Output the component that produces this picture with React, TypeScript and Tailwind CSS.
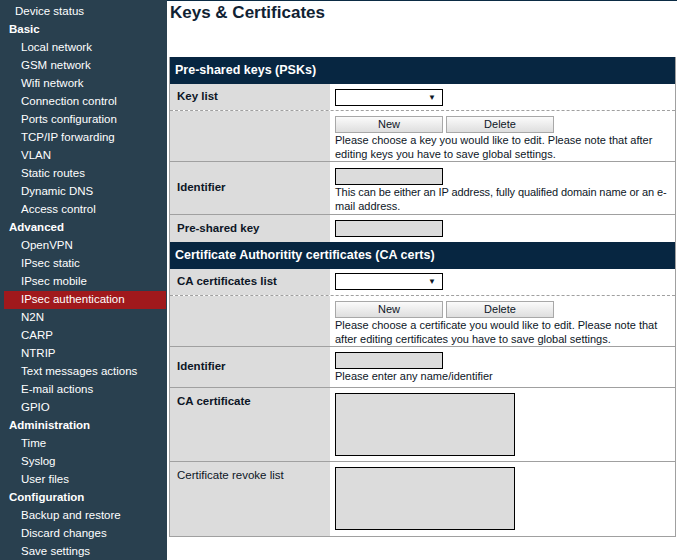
import { ReactNode } from 'react'

type NavItem = { label: string; kind?: 'cat' | 'top'; active?: boolean }

const nav: NavItem[] = [
  { label: 'Device status', kind: 'top' },
  { label: 'Basic', kind: 'cat' },
  { label: 'Local network' },
  { label: 'GSM network' },
  { label: 'Wifi network' },
  { label: 'Connection control' },
  { label: 'Ports configuration' },
  { label: 'TCP/IP forwarding' },
  { label: 'VLAN' },
  { label: 'Static routes' },
  { label: 'Dynamic DNS' },
  { label: 'Access control' },
  { label: 'Advanced', kind: 'cat' },
  { label: 'OpenVPN' },
  { label: 'IPsec static' },
  { label: 'IPsec mobile' },
  { label: 'IPsec authentication', active: true },
  { label: 'N2N' },
  { label: 'CARP' },
  { label: 'NTRIP' },
  { label: 'Text messages actions' },
  { label: 'E-mail actions' },
  { label: 'GPIO' },
  { label: 'Administration', kind: 'cat' },
  { label: 'Time' },
  { label: 'Syslog' },
  { label: 'User files' },
  { label: 'Configuration', kind: 'cat' },
  { label: 'Backup and restore' },
  { label: 'Discard changes' },
  { label: 'Save settings' },
]

function Sidebar() {
  return (
    <nav className="w-[167px] shrink-0 bg-[#29404f] pt-[3px] text-[11.5px] text-white">
      {nav.map((item) => {
        if (item.kind === 'cat') {
          return (
            <div key={item.label} className="flex h-[18px] items-center pl-[9px] text-[11.5px] font-bold">
              {item.label}
            </div>
          )
        }
        return (
          <div
            key={item.label}
            className={
              item.active
                ? 'ml-[4px] mr-[1px] flex h-[18px] items-center bg-[#a0191c] pl-[17px]'
                : item.kind === 'top'
                  ? 'flex h-[18px] items-center pl-[15px]'
                  : 'flex h-[18px] items-center pl-[21px]'
            }
          >
            {item.label}
          </div>
        )
      })}
    </nav>
  )
}

function SectionHeader({ children }: { children: ReactNode }) {
  return (
    <div className="flex h-[27px] items-center bg-[#072641] pl-[5px] text-[12.5px] font-bold text-white">
      {children}
    </div>
  )
}

function Row({
  label,
  bold = true,
  top = false,
  border = 'solid',
  height,
  children,
}: {
  label?: string
  bold?: boolean
  top?: boolean
  border?: 'solid' | 'dashed' | 'none'
  height: string
  children?: ReactNode
}) {
  const borderCls =
    border === 'solid'
      ? 'border-b border-[#a0a0a0]'
      : border === 'dashed'
        ? 'border-b border-dashed border-[#a0a0a0]'
        : ''
  return (
    <div className={`flex ${height} ${borderCls}`}>
      <div
        className={`flex w-[160px] shrink-0 bg-[#dcdcdc] pl-[7px] ${top ? 'items-start pt-[5px]' : 'items-center'} ${bold ? 'font-bold' : ''}`}
      >
        {label}
      </div>
      <div className="min-w-0 flex-1 bg-white pl-[5px] pt-[5px]">{children}</div>
    </div>
  )
}

function Select() {
  return (
    <div className="flex h-[17px] w-[108px] items-center justify-end border border-black bg-white pr-[6px] text-[8px] leading-none">
      ▼
    </div>
  )
}

function Buttons() {
  return (
    <div className="flex gap-[3px]">
      <div className="flex h-[17px] w-[108px] items-center justify-center border border-[#a8a8a8] bg-gradient-to-b from-[#fbfbfb] to-[#dedede] text-[11px]">
        New
      </div>
      <div className="flex h-[17px] w-[108px] items-center justify-center border border-[#a8a8a8] bg-gradient-to-b from-[#fbfbfb] to-[#dedede] text-[11px]">
        Delete
      </div>
    </div>
  )
}

function GrayInput() {
  return <div className="h-[17px] w-[108px] border border-black bg-[#dcdcdc]" />
}

function TextArea() {
  return <div className="h-[63px] w-[180px] border border-black bg-[#dcdcdc]" />
}

function Help({ children }: { children: ReactNode }) {
  return <p className="pr-[2px] text-[11px] leading-[14px]">{children}</p>
}

export default function App() {
  return (
    <div
      className="flex h-[560px] w-[677px] overflow-hidden bg-white text-[#0d1626]"
      style={{ fontFamily: '"Liberation Sans", Arial, sans-serif' }}
    >
      <Sidebar />
      <main className="flex-1 border-t border-[#0b2b44] pl-[2px] pr-[1px]">
        <h1 className="h-[56px] pl-[1px] pt-[1px] text-[17px] font-bold leading-[22px] text-[#102233]">
          Keys &amp; Certificates
        </h1>
        <div className="border-x border-b border-[#a0a0a0] text-[11.5px]">
          <SectionHeader>Pre-shared keys (PSKs)</SectionHeader>
          <Row label="Key list" border="dashed" height="h-[27px]">
            <Select />
          </Row>
          <Row height="h-[51px]">
            <Buttons />
            <Help>
              Please choose a key you would like to edit. Please note that after editing keys you have to
              save global settings.
            </Help>
          </Row>
          <Row label="Identifier" height="h-[53px]">
            <div className="pt-[1px]">
              <GrayInput />
            </div>
            <Help>
              <span className="block whitespace-nowrap tracking-[-0.1px]">
                This can be either an IP address, fully qualified domain name or an e-
              </span>
              <span className="block">mail address.</span>
            </Help>
          </Row>
          <Row label="Pre-shared key" border="none" height="h-[27px]">
            <GrayInput />
          </Row>
          <SectionHeader>Certificate Authoritity certificates (CA certs)</SectionHeader>
          <Row label="CA certificates list" border="dashed" height="h-[27px]">
            <div className="-mt-[1px]">
              <Select />
            </div>
          </Row>
          <Row height="h-[51px]">
            <Buttons />
            <Help>
              Please choose a certificate you would like to edit. Please note that after editing certificates
              you have to save global settings.
            </Help>
          </Row>
          <Row label="Identifier" height="h-[41px]">
            <GrayInput />
            <Help>Please enter any name/identifier</Help>
          </Row>
          <Row label="CA certificate" top height="h-[74px]">
            <TextArea />
          </Row>
          <Row label="Certificate revoke list" bold={false} top border="none" height="h-[74px]">
            <TextArea />
          </Row>
        </div>
      </main>
    </div>
  )
}
